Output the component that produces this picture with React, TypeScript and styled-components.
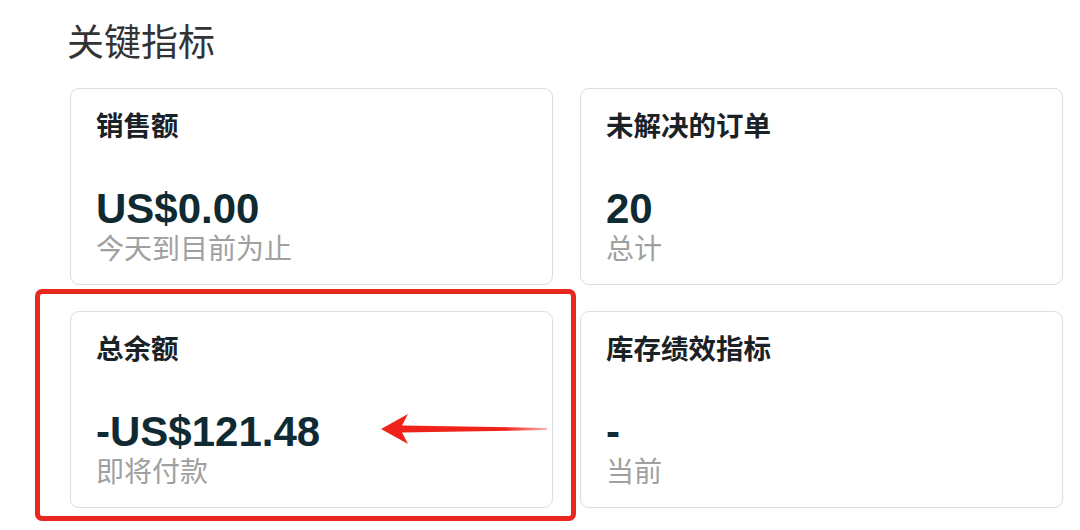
import styled, { createGlobalStyle } from 'styled-components';

const GlobalStyle = createGlobalStyle`
  html, body {
    margin: 0;
    padding: 0;
    background: #ffffff;
  }
  body {
    font-family: 'Liberation Sans', 'Noto Sans CJK SC', sans-serif;
  }
`;

type Metric = {
  label: string;
  value: string;
  note: string;
  highlight?: boolean;
};

const metrics: Metric[] = [
  { label: '销售额', value: 'US$0.00', note: '今天到目前为止' },
  { label: '未解决的订单', value: '20', note: '总计' },
  { label: '总余额', value: '-US$121.48', note: '即将付款', highlight: true },
  { label: '库存绩效指标', value: '-', note: '当前' },
];

export default function App() {
  return (
    <>
      <GlobalStyle />
      <Page>
        <Title>关键指标</Title>
        <Grid>
          {metrics.map((m) => (
            <Card key={m.label}>
              <Label>{m.label}</Label>
              <Value>{m.value}</Value>
              <Note>{m.note}</Note>
              {m.highlight && (
                <>
                  <Highlight />
                  <Arrow viewBox="0 0 166 34">
                    <defs>
                      <linearGradient id="tail" x1="0" x2="1" y1="0" y2="0">
                        <stop offset="0" stopColor="#f0231a" />
                        <stop offset="0.75" stopColor="#f0231a" />
                        <stop offset="1" stopColor="#f0231a" stopOpacity="0.35" />
                      </linearGradient>
                    </defs>
                    <path
                      d="M0 17 L27 2 L21 13.5 L166 16 L166 18 L21 20.5 L27 32 Z"
                      fill="url(#tail)"
                    />
                  </Arrow>
                </>
              )}
            </Card>
          ))}
        </Grid>
      </Page>
    </>
  );
}

const Page = styled.div`
  width: 1080px;
  height: 530px;
  box-sizing: border-box;
  padding: 21px 0 0 70px;
  overflow: hidden;
`;

const Title = styled.h2`
  margin: 0 0 21px -3px;
  font-size: 37px;
  line-height: 46px;
  font-weight: 400;
  color: #333333;
`;

const Grid = styled.div`
  display: grid;
  grid-template-columns: 483px 483px;
  grid-auto-rows: 197px;
  gap: 26px 27px;
`;

const Card = styled.div`
  position: relative;
  display: flex;
  flex-direction: column;
  box-sizing: border-box;
  padding: 21px 25px 18px;
  border: 1px solid #d9dede;
  border-radius: 9px;
  background: #ffffff;
`;

const Label = styled.div`
  font-size: 27.5px;
  line-height: 33px;
  font-weight: 700;
  color: #1b2226;
`;

const Value = styled.div`
  margin-top: auto;
  font-size: 42px;
  line-height: 44px;
  font-weight: 700;
  color: #0f2a33;
`;

const Note = styled.div`
  margin-top: 3px;
  font-size: 28px;
  line-height: 32px;
  color: #a0a0a0;
`;

const Highlight = styled.div`
  position: absolute;
  top: -23px;
  left: -36px;
  right: -24px;
  bottom: -14px;
  border: 5px solid #e8271f;
  border-radius: 7px;
  pointer-events: none;
`;

const Arrow = styled.svg`
  position: absolute;
  left: 310px;
  top: 100px;
  width: 166px;
  height: 34px;
`;
